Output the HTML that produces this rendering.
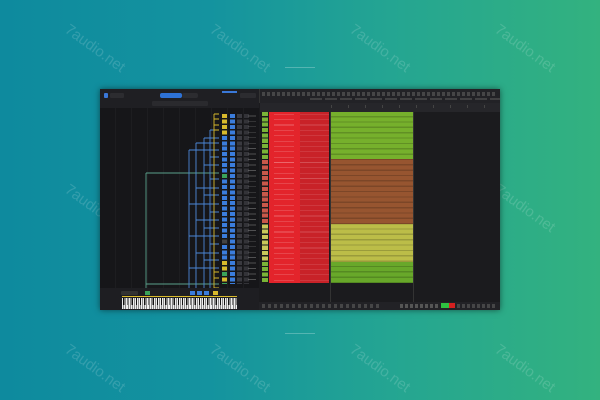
<!DOCTYPE html>
<html><head><meta charset="utf-8"><style>
*{margin:0;padding:0;box-sizing:border-box}
body{width:600px;height:400px;overflow:hidden;position:relative;font-family:"Liberation Sans",sans-serif;
background:linear-gradient(90deg,#0e8a9e 0%,#14939f 35%,#24a592 65%,#33b27f 100%)}
.a{position:absolute}
.wm{position:absolute;color:rgba(255,255,255,.15);font-size:15px;transform:rotate(36deg);white-space:nowrap}
.win{left:100px;top:89px;width:400px;height:221px;background:#1b1b1e;box-shadow:0 0 6px rgba(0,0,0,.5)}
</style></head><body>
<div class="wm" style="left:60px;top:40px">7audio.net</div>
<div class="wm" style="left:205px;top:40px">7audio.net</div>
<div class="wm" style="left:345px;top:40px">7audio.net</div>
<div class="wm" style="left:490px;top:40px">7audio.net</div>
<div class="wm" style="left:60px;top:200px">7audio.net</div>
<div class="wm" style="left:490px;top:200px">7audio.net</div>
<div class="wm" style="left:60px;top:360px">7audio.net</div>
<div class="wm" style="left:205px;top:360px">7audio.net</div>
<div class="wm" style="left:345px;top:360px">7audio.net</div>
<div class="wm" style="left:490px;top:360px">7audio.net</div>
<div class="a" style="left:285px;top:67px;width:30px;height:1px;background:rgba(255,255,255,.25)"></div>
<div class="a" style="left:285px;top:333px;width:30px;height:1px;background:rgba(255,255,255,.25)"></div>

<div class="a win"></div>
<div class="a" style="left:100px;top:89px;width:159px;height:221px;background:#161619"></div>
<div class="a" style="left:100px;top:89px;width:159px;height:19px;background:#1f1f23"></div>
<div class="a" style="left:104px;top:93px;width:4px;height:5px;background:#3a78d8;border-radius:1px"></div>
<div class="a" style="left:110px;top:93px;width:14px;height:5px;background:#2c2c30;border-radius:1px"></div>
<div class="a" style="left:160px;top:93px;width:22px;height:5px;background:#2e72d6;border-radius:2px"></div>
<div class="a" style="left:182px;top:93px;width:16px;height:5px;background:#2c2c30;border-radius:2px"></div>
<div class="a" style="left:222px;top:91px;width:15px;height:2px;background:#3a78d8"></div>
<div class="a" style="left:240px;top:93px;width:16px;height:5px;background:#2c2c30;border-radius:1px"></div>
<div class="a" style="left:152px;top:101px;width:56px;height:5px;background:#2a2a2e;border-radius:1px"></div>
<div class="a" style="left:100px;top:108px;width:159px;height:180px;background:repeating-linear-gradient(90deg,transparent 0 15px,rgba(255,255,255,.03) 15px 16px)"></div>
<svg class="a" style="left:100px;top:108px" width="159" height="190">
<g fill="none" stroke-width="0.9">
<path d="M46 65V182M46 65H119M46 176H119M46 188H119" stroke="#5aa08a"/>
<path d="M89 42V182M96 35V182M104 30V182M110 22V182" stroke="#4b86d6"/>
<path d="M110 22H119M104 30H119M96 35H119M89 42H119M110 49H119M104 57H119M110 71H119M96 80H119M104 87H119M89 96H119M110 104H119M96 112H119M104 120H119M89 128H119M110 136H119M96 145H119M104 152H119M89 160H119" stroke="#4b86d6"/>
<path d="M114 6V182M114 6H119M114 11H119M114 17H119M114 22H119M114 164H119M114 170H119M114 180H119" stroke="#d8b92c"/>
</g></svg>
<div class="a" style="left:222px;top:114px;width:30px;height:170px;
background:
linear-gradient(#d8b92c 0 21px,#3b7ddd 21px 59px,#3aa35a 59px 64px,#3b7ddd 64px 124px,#444 124px 130px,#3b7ddd 130px 147px,#d8b92c 147px 158px,#3aa35a 158px 163px,#d8b92c 163px 168px,#3aa35a 168px) 0 0/5px 100% no-repeat,
linear-gradient(#3b7ddd,#3b7ddd) 8px 0/5px 100% no-repeat,
linear-gradient(#3a3a40,#3a3a40) 15px 0/5px 100% no-repeat,
linear-gradient(#333338,#333338) 22px 0/5px 100% no-repeat;
-webkit-mask:repeating-linear-gradient(#000 0 4px,transparent 4px 5.45px)"></div>
<div class="a" style="left:248px;top:114px;width:8px;height:170px;background:repeating-linear-gradient(transparent 0 1.5px,#777 1.5px 2.3px,transparent 2.3px 5.45px);opacity:.6"></div>
<div class="a" style="left:100px;top:288px;width:159px;height:22px;background:#1e1e22"></div>
<div class="a" style="left:121px;top:291px;width:17px;height:4px;background:#333;border-radius:1px"></div>
<div class="a" style="left:145px;top:291px;width:5px;height:4px;background:#3aa35a"></div>
<div class="a" style="left:190px;top:291px;width:20px;height:4px;background:repeating-linear-gradient(90deg,#3b7ddd 0 5px,transparent 5px 7px)"></div>
<div class="a" style="left:213px;top:291px;width:5px;height:4px;background:#d8b92c"></div>
<div class="a" style="left:122px;top:298px;width:115px;height:11px;background:repeating-linear-gradient(90deg,#eee 0 1.6px,#222 1.6px 2.1px)"></div>
<div class="a" style="left:122px;top:298px;width:115px;height:7px;background:repeating-linear-gradient(90deg,transparent 0 1.2px,#111 1.2px 2.4px,transparent 2.4px 4.2px)"></div>
<div class="a" style="left:122px;top:296px;width:115px;height:1px;background:#d8b92c"></div>

<div class="a" style="left:259px;top:89px;width:241px;height:14px;background:#222226;border-left:1px solid #333"></div>
<div class="a" style="left:262px;top:92px;width:235px;height:4px;background:repeating-linear-gradient(90deg,#555 0 3px,transparent 3px 5px);opacity:.7"></div>
<div class="a" style="left:310px;top:98px;width:190px;height:2px;background:repeating-linear-gradient(90deg,#555 0 12px,transparent 12px 15px);opacity:.6"></div>
<div class="a" style="left:260px;top:103px;width:240px;height:9px;background:#26262a"></div>
<div class="a" style="left:331px;top:105px;width:168px;height:3px;background:repeating-linear-gradient(90deg,#444 0 1px,transparent 1px 17px)"></div>
<div class="a" style="left:261px;top:112px;width:70px;height:171px;background:#1a1a1c"></div>
<div class="a" style="left:262px;top:112px;width:6px;height:171px;background:linear-gradient(#7ab437 0 47px,#c8584a 47px 112px,#c7c85a 112px 150px,#7ab437 150px);-webkit-mask:repeating-linear-gradient(#000 0 4px,transparent 4px 5.35px)"></div>
<div class="a" style="left:269px;top:112px;width:31px;height:171px;background:#e3242b"></div>
<div class="a" style="left:300px;top:112px;width:29px;height:171px;background:#c82228"></div>
<div class="a" style="left:274px;top:112px;width:20px;height:171px;background:repeating-linear-gradient(transparent 0 2px,rgba(255,255,255,.3) 2px 2.6px,transparent 2.6px 5.35px)"></div>
<div class="a" style="left:300px;top:112px;width:29px;height:171px;background:repeating-linear-gradient(transparent 0 2px,rgba(255,255,255,.2) 2px 2.6px,transparent 2.6px 5.35px)"></div>
<div class="a" style="left:331px;top:112px;width:82px;height:171px;background:linear-gradient(#76b02c 0 47px,#975530 47px 112px,#bcbd48 112px 150px,#68a82a 150px)"></div>
<div class="a" style="left:331px;top:112px;width:82px;height:171px;background:repeating-linear-gradient(transparent 0 4px,rgba(0,0,0,.18) 4px 5.35px)"></div>
<div class="a" style="left:413px;top:112px;width:1px;height:190px;background:#333"></div>
<div class="a" style="left:330px;top:112px;width:1px;height:190px;background:#333"></div>
<div class="a" style="left:259px;top:302px;width:241px;height:8px;background:#222226"></div>
<div class="a" style="left:262px;top:304px;width:120px;height:4px;background:repeating-linear-gradient(90deg,#555 0 3px,transparent 3px 6px);opacity:.7"></div>
<div class="a" style="left:400px;top:304px;width:40px;height:4px;background:repeating-linear-gradient(90deg,#555 0 3px,transparent 3px 5px)"></div>
<div class="a" style="left:441px;top:303px;width:8px;height:5px;background:#2ec040"></div>
<div class="a" style="left:449px;top:303px;width:6px;height:5px;background:#d42020"></div>
<div class="a" style="left:457px;top:304px;width:40px;height:4px;background:repeating-linear-gradient(90deg,#555 0 3px,transparent 3px 5px);opacity:.7"></div>
</body></html>
